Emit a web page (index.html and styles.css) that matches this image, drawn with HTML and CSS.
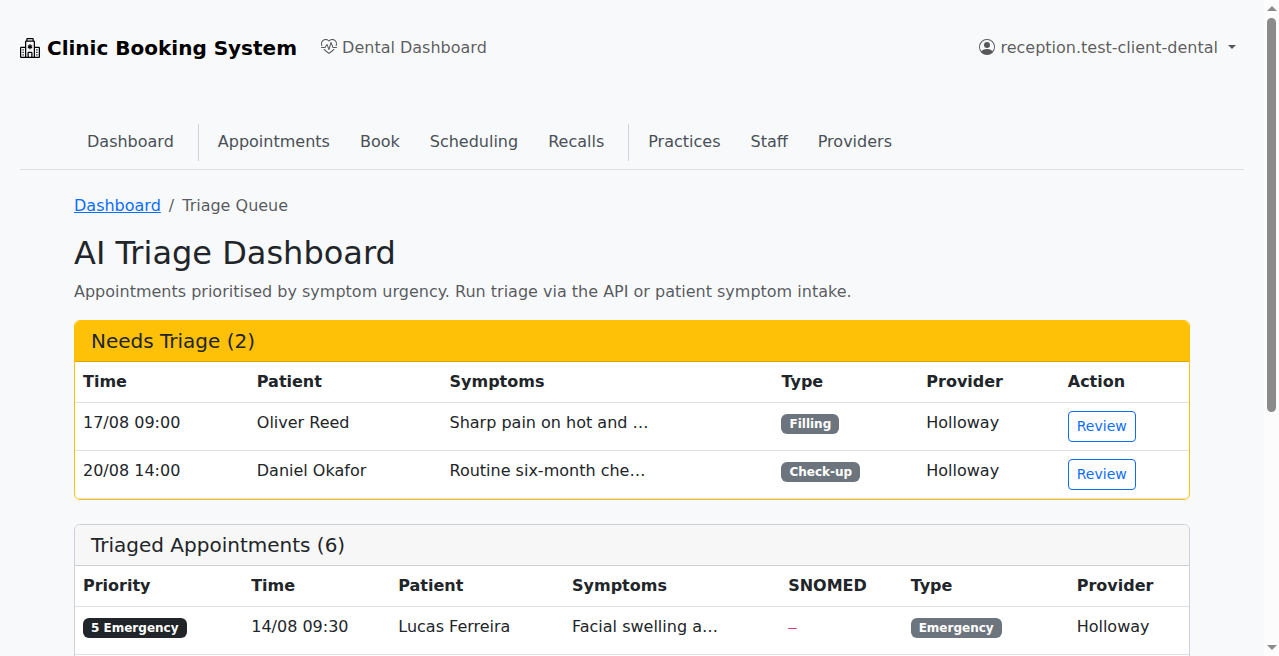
FILE: index.html
```html
<!doctype html>
<html lang="en">
<head>
    <meta charset="utf-8">
    <meta name="viewport" content="width=device-width, initial-scale=1">
    <title>AI Triage Dashboard</title>
    <link rel="stylesheet" href="styles.css">
</head>
<body>
    <div class="page">
        <header class="navbar">
            <a class="brand" href="#"><svg class="icon" viewBox="0 0 16 16" aria-hidden="true"><path d="M8.5 5.034v1.1l.953-.55.5.867L9 7l.953.55-.5.866-.953-.55v1.1h-1v-1.1l-.953.55-.5-.866L7 7l-.953-.55.5-.866.953.55v-1.1zM13.25 9a.25.25 0 0 0-.25.25v.5c0 .138.112.25.25.25h.5a.25.25 0 0 0 .25-.25v-.5a.25.25 0 0 0-.25-.25zM13 11.25a.25.25 0 0 1 .25-.25h.5a.25.25 0 0 1 .25.25v.5a.25.25 0 0 1-.25.25h-.5a.25.25 0 0 1-.25-.25zm.25 1.75a.25.25 0 0 0-.25.25v.5c0 .138.112.25.25.25h.5a.25.25 0 0 0 .25-.25v-.5a.25.25 0 0 0-.25-.25zm-11-4a.25.25 0 0 0-.25.25v.5c0 .138.112.25.25.25h.5A.25.25 0 0 0 3 9.75v-.5A.25.25 0 0 0 2.75 9zm0 2a.25.25 0 0 0-.25.25v.5c0 .138.112.25.25.25h.5a.25.25 0 0 0 .25-.25v-.5a.25.25 0 0 0-.25-.25zM2 13.25a.25.25 0 0 1 .25-.25h.5a.25.25 0 0 1 .25.25v.5a.25.25 0 0 1-.25.25h-.5a.25.25 0 0 1-.25-.25z"/><path d="M5 1a1 1 0 0 1 1-1h4a1 1 0 0 1 1 1v1a1 1 0 0 1 1 1v4h3a1 1 0 0 1 1 1v7a1 1 0 0 1-1 1H1a1 1 0 0 1-1-1V8a1 1 0 0 1 1-1h3V3a1 1 0 0 1 1-1zm2 14h2v-3H7zm3 0h1V3H5v12h1v-3a1 1 0 0 1 1-1h2a1 1 0 0 1 1 1zm0-14H6v1h4zm2 7v7h3V8zm-8 7V8H1v7z"/></svg> Clinic Booking System</a>
            <a class="navbar-link" href="#"><svg class="icon" viewBox="0 0 16 16" aria-hidden="true"><path d="m8 2.748-.717-.737C5.6.281 2.514.878 1.4 3.053.918 3.995.78 5.323 1.508 7H.43c-2.128-5.697 4.165-8.83 7.394-5.857q.09.083.176.171a3 3 0 0 1 .176-.17c3.23-2.974 9.522.159 7.394 5.856h-1.078c.728-1.677.59-3.005.108-3.947C13.486.878 10.4.28 8.717 2.01zM2.212 10h1.315C4.593 11.183 6.05 12.458 8 13.795c1.949-1.337 3.407-2.612 4.473-3.795h1.315c-1.265 1.566-3.14 3.25-5.788 5-2.648-1.75-4.523-3.434-5.788-5"/><path d="M10.464 3.314a.5.5 0 0 0-.945.049L7.921 8.956 6.464 5.314a.5.5 0 0 0-.88-.091L3.732 8H.5a.5.5 0 0 0 0 1H4a.5.5 0 0 0 .416-.223l1.473-2.209 1.647 4.118a.5.5 0 0 0 .945-.049l1.598-5.593 1.457 3.642A.5.5 0 0 0 12 9h3.5a.5.5 0 0 0 0-1h-3.162z"/></svg> Dental Dashboard</a>
            <button class="navbar-link user-menu" type="button"><svg class="icon" viewBox="0 0 16 16" aria-hidden="true"><path d="M11 6a3 3 0 1 1-6 0 3 3 0 0 1 6 0"/><path fill-rule="evenodd" d="M0 8a8 8 0 1 1 16 0A8 8 0 0 1 0 8m8-7a7 7 0 0 0-5.468 11.37C3.242 11.226 4.805 10 8 10s4.757 1.225 5.468 2.37A7 7 0 0 0 8 1"/></svg> reception.test-client-dental <span class="caret"></span></button>
        </header>

        <nav class="subnav">
            <ul class="container">
                <li><a href="#">Dashboard</a></li>
                <li class="divider"></li>
                <li><a href="#">Appointments</a></li>
                <li><a href="#">Book</a></li>
                <li><a href="#">Scheduling</a></li>
                <li><a href="#">Recalls</a></li>
                <li class="divider"></li>
                <li><a href="#">Practices</a></li>
                <li><a href="#">Staff</a></li>
                <li><a href="#">Providers</a></li>
            </ul>
        </nav>

        <main class="container">
            <ol class="breadcrumb">
                <li><a href="#">Dashboard</a></li>
                <li>Triage Queue</li>
            </ol>

            <h1>AI Triage Dashboard</h1>
            <p class="lead">Appointments prioritised by symptom urgency. Run triage via the API or patient symptom intake.</p>

            <section class="card card-warning">
                <h2 class="card-header">Needs Triage (2)</h2>
                <table class="needs-table">
                    <thead>
                        <tr>
                            <th class="w-time">Time</th>
                            <th class="w-patient">Patient</th>
                            <th class="w-symptoms">Symptoms</th>
                            <th class="w-type">Type</th>
                            <th class="w-provider">Provider</th>
                            <th>Action</th>
                        </tr>
                    </thead>
                    <tbody>
                        <tr>
                            <td>17/08 09:00</td>
                            <td>Oliver Reed</td>
                            <td>Sharp pain on hot and …</td>
                            <td><span class="badge">Filling</span></td>
                            <td>Holloway</td>
                            <td><a class="btn" href="#">Review</a></td>
                        </tr>
                        <tr>
                            <td>20/08 14:00</td>
                            <td>Daniel Okafor</td>
                            <td>Routine six-month che…</td>
                            <td><span class="badge">Check-up</span></td>
                            <td>Holloway</td>
                            <td><a class="btn" href="#">Review</a></td>
                        </tr>
                    </tbody>
                </table>
            </section>

            <section class="card card-queue">
                <h2 class="card-header">Triaged Appointments (6)</h2>
                <table class="triaged-table">
                    <thead>
                        <tr>
                            <th class="w-priority">Priority</th>
                            <th class="w-time">Time</th>
                            <th class="w-patient">Patient</th>
                            <th class="w-symptoms">Symptoms</th>
                            <th class="w-snomed">SNOMED</th>
                            <th class="w-type">Type</th>
                            <th>Provider</th>
                        </tr>
                    </thead>
                    <tbody>
                        <tr>
                            <td><span class="badge badge-dark">5 Emergency</span></td>
                            <td>14/08 09:30</td>
                            <td>Lucas Ferreira</td>
                            <td>Facial swelling a…</td>
                            <td><code>–</code></td>
                            <td><span class="badge">Emergency</span></td>
                            <td>Holloway</td>
                        </tr>
                    </tbody>
                </table>
            </section>
        </main>
    </div>

    <div class="scrollbar" aria-hidden="true">
        <span class="arrow arrow-up"></span>
        <div class="track"><div class="thumb"></div></div>
        <span class="arrow arrow-down"></span>
    </div>
</body>
</html>
```
FILE: styles.css
```css
* {
    box-sizing: border-box;
}

body {
    display: flex;
    height: 100vh;
    margin: 0;
    font-family: "DejaVu Sans", sans-serif;
    font-size: 16px;
    line-height: 24px;
    color: #212529;
    background-color: #f8f9fb;
}

.page {
    flex: 1;
    min-width: 0;
    padding: 20px;
    overflow-y: auto;
    scrollbar-width: none;
}

.container {
    max-width: 1140px;
    margin: 0 auto;
    padding: 0 12px;
}

.icon {
    width: 1em;
    height: 1em;
    fill: currentColor;
    vertical-align: -2px;
}

/* Top bar */
.navbar {
    display: flex;
    align-items: center;
    height: 56px;
    margin-bottom: 48px;
}

.brand {
    margin-right: 16px;
    font-size: 20px;
    font-weight: bold;
    color: #000;
    text-decoration: none;
}

.brand .icon {
    vertical-align: -3px;
}

.navbar-link {
    padding: 8px;
    border: 0;
    background: none;
    font: inherit;
    color: rgba(0, 0, 0, 0.65);
    text-decoration: none;
}

.user-menu {
    margin-left: auto;
}

.caret {
    display: inline-block;
    margin-left: 5px;
    vertical-align: 4px;
    border: 4px solid transparent;
    border-top-color: currentColor;
    border-bottom: 0;
}

/* Section links */
.subnav {
    padding-bottom: 8px;
    margin-bottom: 24px;
    border-bottom: 1px solid #dee2e6;
}

.subnav ul {
    display: flex;
    gap: 4px;
    list-style: none;
}

.subnav a {
    display: block;
    padding: 6px 13px 7px;
    color: #495057;
    text-decoration: none;
}

.divider {
    margin: 0 2px 0 7px;
    border-left: 1px solid #ced4da;
}

.breadcrumb {
    display: flex;
    margin: 0 0 16px;
    padding: 0;
    list-style: none;
    color: rgba(33, 37, 41, 0.75);
}

.breadcrumb a {
    color: #0d6efd;
}

.breadcrumb li + li::before {
    content: "/";
    padding: 0 8px;
}

h1 {
    margin: 0 0 8px;
    font-size: 32px;
    font-weight: normal;
    line-height: 38px;
}

.lead {
    margin: 0 0 16px;
    color: rgba(33, 37, 41, 0.75);
}

/* Cards */
.card {
    margin-bottom: 24px;
    border: 1px solid #ced0d3;
    border-radius: 6px;
    background-color: #fff;
    overflow: hidden;
}

.card-header {
    margin: 0;
    padding: 8px 16px;
    font-size: 20px;
    font-weight: normal;
    line-height: 24px;
    background-color: #f7f7f7;
    border-bottom: 1px solid #ced0d3;
}

.card-warning {
    border-color: #ffc107;
}

.card-warning .card-header {
    background-color: #ffc107;
    border-bottom-color: #d9a406;
}

.card-queue {
    min-height: 372px;
    margin-bottom: 128px;
}

/* Tables */
table {
    width: 100%;
    table-layout: fixed;
    border-collapse: separate;
    border-spacing: 0;
}

th,
td {
    height: 48px;
    padding: 8px;
    text-align: left;
    vertical-align: top;
    border-bottom: 1px solid #dee2e6;
}

th {
    height: 41px;
}

.needs-table .w-time { width: 15.6%; }
.needs-table .w-patient { width: 17.3%; }
.needs-table .w-symptoms { width: 29.8%; }
.needs-table .w-type { width: 13%; }
.needs-table .w-provider { width: 12.7%; }

.triaged-table .w-priority { width: 15.1%; }
.triaged-table .w-time { width: 13.2%; }
.triaged-table .w-patient { width: 15.6%; }
.triaged-table .w-symptoms { width: 19.4%; }
.triaged-table .w-snomed { width: 11%; }
.triaged-table .w-type { width: 14.9%; }

.badge {
    display: inline-block;
    padding: 4px 8px;
    border-radius: 6px;
    font-size: 12px;
    font-weight: bold;
    line-height: 12px;
    color: #fff;
    background-color: #6c757d;
}

.badge-dark {
    background-color: #212529;
}

.btn {
    display: inline-block;
    padding: 4px 8px;
    border: 1px solid #0d6efd;
    border-radius: 4px;
    font-size: 14px;
    line-height: 21px;
    color: #0d6efd;
    text-decoration: none;
    vertical-align: middle;
}

code {
    font-family: "DejaVu Sans Mono", monospace;
    font-size: 14px;
    color: #d63384;
}

/* Scrollbar */
.scrollbar {
    display: flex;
    flex-direction: column;
    align-items: center;
    width: 15px;
    padding: 6px 0;
    background-color: #fcfcfc;
}

.track {
    flex: 1;
    padding: 7px 0;
}

.thumb {
    width: 9px;
    height: 63.5%;
    border-radius: 5px;
    background-color: #8b8b8b;
}

.arrow {
    border: 5px solid transparent;
}

.arrow-up {
    border-top: 0;
    border-bottom-color: #8b8b8b;
}

.arrow-down {
    border-bottom: 0;
    border-top-color: #8b8b8b;
}
```
